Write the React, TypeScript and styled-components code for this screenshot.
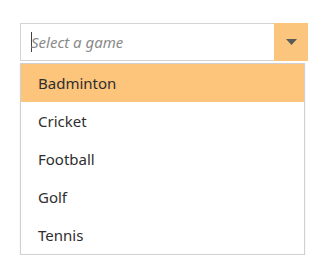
import styled, { createGlobalStyle } from "styled-components";

const games = ["Badminton", "Cricket", "Football", "Golf", "Tennis"];

const GlobalStyle = createGlobalStyle`
  body {
    margin: 0;
    background: #ffffff;
    font-family: "Noto Sans", "Open Sans", sans-serif;
  }
`;

function App() {
  return (
    <Page>
      <GlobalStyle />
      <Combo>
        <Field>
          <Caret />
          <Placeholder>Select a game</Placeholder>
        </Field>
        <Toggle>
          <svg width="11" height="6" viewBox="0 0 11 6">
            <path d="M0 0h11L5.5 6z" fill="#5a5a5a" />
          </svg>
        </Toggle>
      </Combo>

      <Popup>
        {games.map((g, i) => (
          <Item key={g} $active={i === 0}>
            {g}
          </Item>
        ))}
      </Popup>
    </Page>
  );
}

export default App;

const Page = styled.div`
  padding: 23px 13px 0 20px;
  width: 288px;
`;

const Combo = styled.div`
  display: flex;
  height: 38px;
  border: 1px solid #d4d4d4;
  box-sizing: border-box;
  background: #fff;
`;

const Field = styled.div`
  flex: 1;
  display: flex;
  align-items: center;
  padding-left: 10px;
`;

const Caret = styled.span`
  width: 1px;
  height: 20px;
  background: #444;
  margin-right: -1px;
`;

const Placeholder = styled.span`
  font-style: italic;
  font-size: 15px;
  color: #8a8a8a;
`;

const Toggle = styled.div`
  width: 34px;
  background: #fcc57e;
  display: flex;
  align-items: center;
  justify-content: center;
  margin: -1px -1px -1px 0;
`;

const Popup = styled.div`
  margin-top: 2px;
  width: 285px;
  border: 1px solid #d0d0d0;
  box-sizing: border-box;
  background: #fff;
  box-shadow: 0 1px 2px rgba(0, 0, 0, 0.08);
`;

const Item = styled.div<{ $active?: boolean }>`
  height: 38px;
  display: flex;
  align-items: center;
  padding-left: 17px;
  font-size: 15px;
  color: #2e2e2e;
  background: ${(p) => (p.$active ? "#fdc47c" : "transparent")};
`;
